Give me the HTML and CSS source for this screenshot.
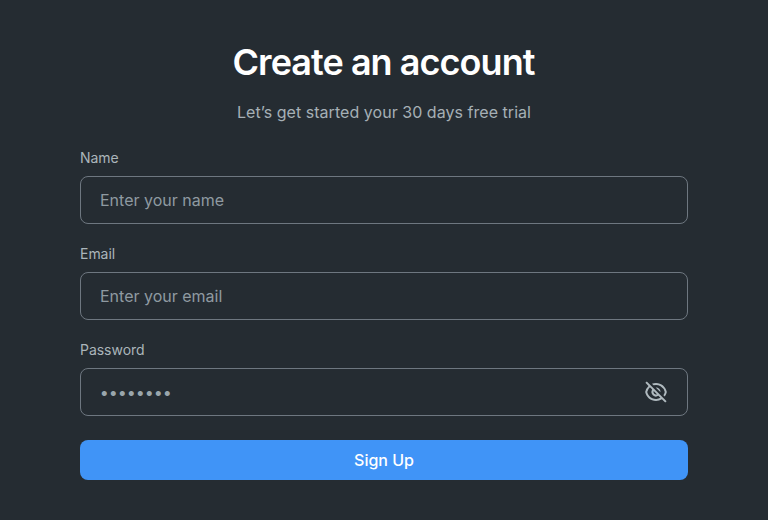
FILE: index.html
```html
<!DOCTYPE html>
<html lang="en">
<head>
<meta charset="utf-8">
<title>Create an account</title>
<link rel="stylesheet" href="styles.css">
</head>
<body>
<main class="signup">
  <h1 class="title">Create an account</h1>
  <p class="subtitle">Let’s get started your 30 days free trial</p>
  <form class="form">
    <div class="field">
      <label class="label" for="name">Name</label>
      <div class="control"><input class="input" id="name" type="text" placeholder="Enter your name"></div>
    </div>
    <div class="field">
      <label class="label" for="email">Email</label>
      <div class="control"><input class="input" id="email" type="email" placeholder="Enter your email"></div>
    </div>
    <div class="field">
      <label class="label" for="password">Password</label>
      <div class="control">
        <input class="input input-password" id="password" type="text" placeholder="••••••••">
        <svg class="eye" viewBox="0 0 24 24" aria-hidden="true">
          <path d="M17.882 19.297A10.949 10.949 0 0 1 12 21c-5.392 0-9.878-3.88-10.819-9a10.982 10.982 0 0 1 3.34-6.066L1.392 2.808l1.415-1.415 19.799 19.8-1.415 1.414-3.31-3.31zM5.935 7.35A8.965 8.965 0 0 0 3.223 12a9.005 9.005 0 0 0 13.201 5.838l-2.028-2.028A4.5 4.5 0 0 1 8.19 9.604L5.935 7.35zm6.979 6.978l-3.242-3.242a2.5 2.5 0 0 0 3.241 3.241zm7.893 2.264l-1.431-1.43A8.935 8.935 0 0 0 20.777 12 9.005 9.005 0 0 0 9.552 5.338L7.974 3.76C9.221 3.27 10.58 3 12 3c5.392 0 9.878 3.88 10.819 9a10.947 10.947 0 0 1-2.012 4.592zm-9.084-9.084a4.5 4.5 0 0 1 4.769 4.769l-4.77-4.769z"/>
        </svg>
      </div>
    </div>
    <button class="submit" type="button">Sign Up</button>
  </form>
</main>
</body>
</html>
```

FILE: styles.css
```css
* { box-sizing: border-box; }
body {
  margin: 0;
  min-height: 520px;
  background: #252c32;
  font-family: Inter, sans-serif;
  color: #fff;
}
.signup { padding: 40px 80px; }
.title {
  margin: 0;
  padding-right: 1px;
  text-align: center;
  font-size: 36px;
  line-height: 44px;
  font-weight: 600;
  letter-spacing: -0.95px;
}
.subtitle {
  margin: 16px 0 24px;
  text-align: center;
  font-size: 16px;
  line-height: 24px;
  font-weight: 400;
  letter-spacing: 0.04px;
  color: #a6b0b6;
}
.form { display: flex; flex-direction: column; gap: 20px; }
.field { display: flex; flex-direction: column; gap: 8px; }
.label { font-size: 14px; line-height: 20px; letter-spacing: -0.03px; color: #abb5ba; }
.control {
  display: flex;
  align-items: center;
  height: 48px;
  padding: 0 19px;
  border: 1px solid #6e7780;
  border-radius: 8px;
}
.input {
  flex: 1;
  min-width: 0;
  padding: 0;
  border: 0;
  outline: 0;
  background: none;
  font: 400 16px/24px Inter, sans-serif;
  color: #fff;
}
.input::placeholder { color: #8f9aa1; opacity: 1; }
.input-password { font-weight: 500; letter-spacing: 0.47px; }
.input-password::placeholder { color: #9aa6ac; }
.eye { width: 24px; height: 24px; fill: #b0babf; }
.submit {
  height: 40px;
  margin-top: 4px;
  border: 0;
  border-radius: 8px;
  background: #4094f7;
  color: #fff;
  font: 500 16px/24px Inter, sans-serif;
}
```
